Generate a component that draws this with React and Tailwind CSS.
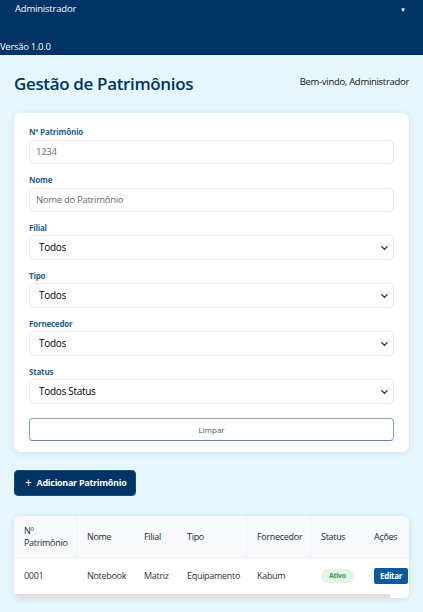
const font = { fontFamily: '"Open Sans", "Noto Sans", sans-serif' };

function Label({ children, gap }) {
  return (
    <label className={`block h-[12px] ${gap} text-[8px] leading-[12px] font-bold text-[#1f5f8f] tracking-[-0.2px]`}>
      {children}
    </label>
  );
}

function Chevron() {
  return (
    <svg width="7" height="5" viewBox="0 0 8 5" className="absolute right-[5px] top-1/2 -translate-y-1/2" aria-hidden="true">
      <path d="M1 1L4 4L7 1" stroke="#222" strokeWidth="1.4" fill="none" strokeLinecap="round" />
    </svg>
  );
}

function SelectField({ label, value }) {
  return (
    <div className="mb-[10px]">
      <Label gap="mb-[1px]">{label}</Label>
      <div className="relative h-[25px] rounded-[5px] border border-[#e8ebee] bg-white flex items-center pl-[9px] text-[10px] tracking-[-0.3px] text-black">
        {value}
        <Chevron />
      </div>
    </div>
  );
}

function InputField({ label, value }) {
  return (
    <div className="mb-[10px]">
      <Label gap="mb-[2px]">{label}</Label>
      <div className="h-[24px] rounded-[5px] border border-[#e8ebee] bg-white flex items-center pl-[6px] text-[9.5px] tracking-[-0.3px] text-[#6b6b6b]">
        {value}
      </div>
    </div>
  );
}

const cols = [
  { w: "w-[63px]", label: <>Nº<br />Patrimônio</>, v: "0001", sep: true },
  { w: "w-[57px]", label: "Nome", v: "Notebook" },
  { w: "w-[43px]", label: "Filial", v: "Matriz" },
  { w: "w-[70px]", label: "Tipo", v: "Equipamento", sep: true },
  { w: "w-[64px]", label: "Fornecedor", v: "Kabum", sep: true },
  { w: "w-[53px]", label: "Status", v: "badge" },
  { w: "w-[60px]", label: "Ações", v: "btn" },
];

export default function App() {
  return (
    <div style={font} className="w-[423px] min-h-[612px] bg-[#e5f6fd]">
      <header className="h-[55px] bg-[#003366] text-white relative">
        <div className="flex items-center justify-between h-[19px] pl-[15px] pr-[17px]">
          <span className="text-[9.5px] tracking-[-0.2px]">Administrador</span>
          <span className="text-[6px] leading-none">▼</span>
        </div>
        <div className="absolute left-0 bottom-[1px] text-[9.5px] leading-[14px] tracking-[-0.3px]">Versão 1.0.0</div>
      </header>

      <main className="px-[14px]">
        <div className="flex items-center justify-between h-[58px]">
          <h1 className="text-[17px] font-semibold text-[#003366] tracking-[-0.35px]">Gestão de Patrimônios</h1>
          <span className="text-[9.5px] text-[#111] tracking-[-0.3px] mb-[3px]">Bem-vindo, Administrador</span>
        </div>

        <section className="rounded-[7px] bg-white shadow-[0_1px_6px_rgba(0,60,100,0.12)] px-[15px] pt-[13px] pb-[11px]">
          <InputField label="Nº Patrimônio" value="1234" />
          <InputField label="Nome" value="Nome do Patrimônio" />
          <SelectField label="Filial" value="Todos" />
          <SelectField label="Tipo" value="Todos" />
          <SelectField label="Fornecedor" value="Todos" />
          <SelectField label="Status" value="Todos Status" />
          <button className="mt-[4px] w-full h-[23px] rounded-[4px] border border-[#8aa4bf] border-b-[#6a86a4] bg-white text-[8px] text-[#555]">
            Limpar
          </button>
        </section>

        <button className="mt-[18px] h-[26px] pl-[10px] pr-[9px] rounded-[4px] bg-[#003366] border border-[#1d4a78] text-white text-[9px] tracking-[-0.3px] font-bold flex items-center gap-[5px]">
          <span className="text-[12px] font-normal leading-none">+</span>
          Adicionar Patrimônio
        </button>

        <section className="mt-[20px] rounded-[6px] bg-white shadow-[0_1px_6px_rgba(0,60,100,0.12)] overflow-hidden">
          <div className="w-[430px] flex flex-col">
            <div className="flex h-[42px] bg-[#f7f9fb] border-b border-[#eceff2]">
              {cols.map((c, i) => (
                <div key={i} className={`${c.w} shrink-0 pl-[10px] flex items-center text-[9px] leading-[12px] tracking-[-0.3px] text-[#1e2a36] ${c.sep ? "border-r border-[#eef1f4]" : ""}`}>
                  {c.label}
                </div>
              ))}
            </div>
            <div className="flex h-[36px]">
              {cols.map((c, i) => (
                <div key={i} className={`${c.w} shrink-0 pl-[10px] flex items-center text-[9px] tracking-[-0.3px] text-[#333]`}>
                  {c.v === "badge" ? (
                    <span className="h-[14px] px-[8px] rounded-full bg-[#e3f5e9] text-[#3b9b52] text-[7px] font-bold flex items-center">Ativo</span>
                  ) : c.v === "btn" ? (
                    <span className="h-[16px] px-[6px] rounded-[2px] bg-[#0b5a9c] text-white text-[8px] font-bold flex items-center">Editar</span>
                  ) : (
                    c.v
                  )}
                </div>
              ))}
            </div>
          </div>
          <div className="h-[4px] bg-white">
            <div className="h-[4px] w-[376px] bg-[#dedede]" />
          </div>
        </section>
      </main>
    </div>
  );
}
